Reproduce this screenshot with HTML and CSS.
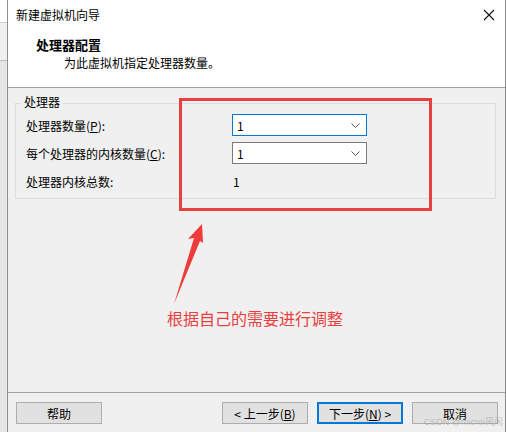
FILE: index.html
```html
<!DOCTYPE html>
<html lang="zh-CN">
<head>
<meta charset="UTF-8">
<title>新建虚拟机向导</title>
<link rel="stylesheet" href="styles.css">
</head>
<body>
<div class="window">
    <div class="titlebar">
        <span class="title">新建虚拟机向导</span>
        <svg class="close" width="12" height="12" viewBox="0 0 12 12"><path d="M1 1L11 11M11 1L1 11" stroke="#111" stroke-width="1.1" fill="none"/></svg>
    </div>
    <div class="header">
        <div class="heading">处理器配置</div>
        <div class="subheading">为此虚拟机指定处理器数量。</div>
    </div>
    <div class="content">
        <div class="group">
            <span class="group-label">处理器</span>
            <div class="row">
                <span>处理器数量(<u>P</u>):</span>
                <div class="combo focused"><span>1</span><svg width="9" height="5" viewBox="0 0 9 5"><path d="M0.5 0.5L4.5 4.5L8.5 0.5" stroke="#555" fill="none"/></svg></div>
            </div>
            <div class="row">
                <span>每个处理器的内核数量(<u>C</u>):</span>
                <div class="combo"><span>1</span><svg width="9" height="5" viewBox="0 0 9 5"><path d="M0.5 0.5L4.5 4.5L8.5 0.5" stroke="#555" fill="none"/></svg></div>
            </div>
            <div class="row">
                <span>处理器内核总数:</span>
                <span class="total">1</span>
            </div>
        </div>
    </div>
    <div class="footer">
        <button class="btn">帮助</button>
        <div class="nav">
            <button class="btn">&lt; 上一步(<u>B</u>)</button>
            <button class="btn default">下一步(<u>N</u>) &gt;</button>
            <button class="btn">取消</button>
        </div>
    </div>
</div>

<!-- 标注 -->
<div class="mark-box"></div>
<svg class="mark-arrow" width="40" height="90" viewBox="0 0 40 90">
    <polygon points="30,0 16,15 22,14 2,80 28,17 31,19" fill="#ef3b3b"/>
</svg>
<div class="mark-text">根据自己的需要进行调整</div>
<div class="watermark">CSDN @microi风闲</div>
</body>
</html>
```

FILE: styles.css
```css
* { margin: 0; padding: 0; box-sizing: border-box; }
body {
    width: 506px; height: 432px; overflow: hidden; position: relative;
    font-family: "Noto Sans CJK SC", "Liberation Sans", sans-serif;
    font-size: 12px; color: #000;
    background: linear-gradient(#fff 0, #fff 22px, #c9c9c9 22px, #c9c9c9 23px, #f0f0f0 23px, #f0f0f0 60px, #bdbdbd 60px, #bdbdbd 61px, #e6e6e6 61px);
}
u { text-decoration: underline; text-underline-offset: 1px; }

.window {
    margin-left: 7px; width: 499px; height: 432px;
    border-left: 1px solid #8e8e8e; border-right: 1px solid #8e8e8e;
    display: flex; flex-direction: column; background: #f0f0f0;
}
.titlebar { height: 30px; background: #fff; display: flex; align-items: center; justify-content: space-between; padding: 0 10px 0 8px; }
.title { line-height: 16px; }
.header { height: 58px; background: #fff; border-bottom: 1px solid #a0a0a0; padding: 6px 0 0 28px; }
.heading { font-weight: bold; font-size: 13px; line-height: 18px; }
.subheading { line-height: 18px; padding-left: 28px; }

.content { flex: 1; padding: 15px 9px 0 7px; }
.group { position: relative; border: 1px solid #dcdcdc; padding: 10px 0 6px 10px; display: flex; flex-direction: column; gap: 6px; }
.group-label { position: absolute; top: -10px; left: 5px; padding: 0 3px; background: #f0f0f0; line-height: 16px; }
.row { display: grid; grid-template-columns: 206px 135px; align-items: center; height: 22px; }
.combo {
    height: 22px; background: #fff; border: 1px solid #7a7a7a;
    display: flex; align-items: center; justify-content: space-between; padding: 0 6px 0 4px;
}
.combo.focused { border-color: #0078d7; }
.total { padding-left: 1px; }

.footer { height: 40px; border-top: 1px solid #a0a0a0; display: flex; justify-content: space-between; padding: 9px 7px 0 8px; }
.nav { display: flex; gap: 9px; }
.btn {
    width: 86px; height: 22px; font: inherit; color: #000;
    background: #e1e1e1; border: 1px solid #adadad;
}
.btn.default { border: 2px solid #0078d7; }

.mark-box { position: absolute; left: 179px; top: 98px; width: 253px; height: 113px; border: 3px solid #e8403f; }
.mark-arrow { position: absolute; left: 172px; top: 224px; }
.mark-text { position: absolute; left: 167px; top: 308px; font-size: 16px; line-height: 20px; color: #e8403f; }
.watermark { position: absolute; right: 3px; top: 417px; font-size: 9px; line-height: 11px; color: rgba(150,150,150,0.5); font-family: "Liberation Sans", "Noto Sans CJK SC", sans-serif; }
```
